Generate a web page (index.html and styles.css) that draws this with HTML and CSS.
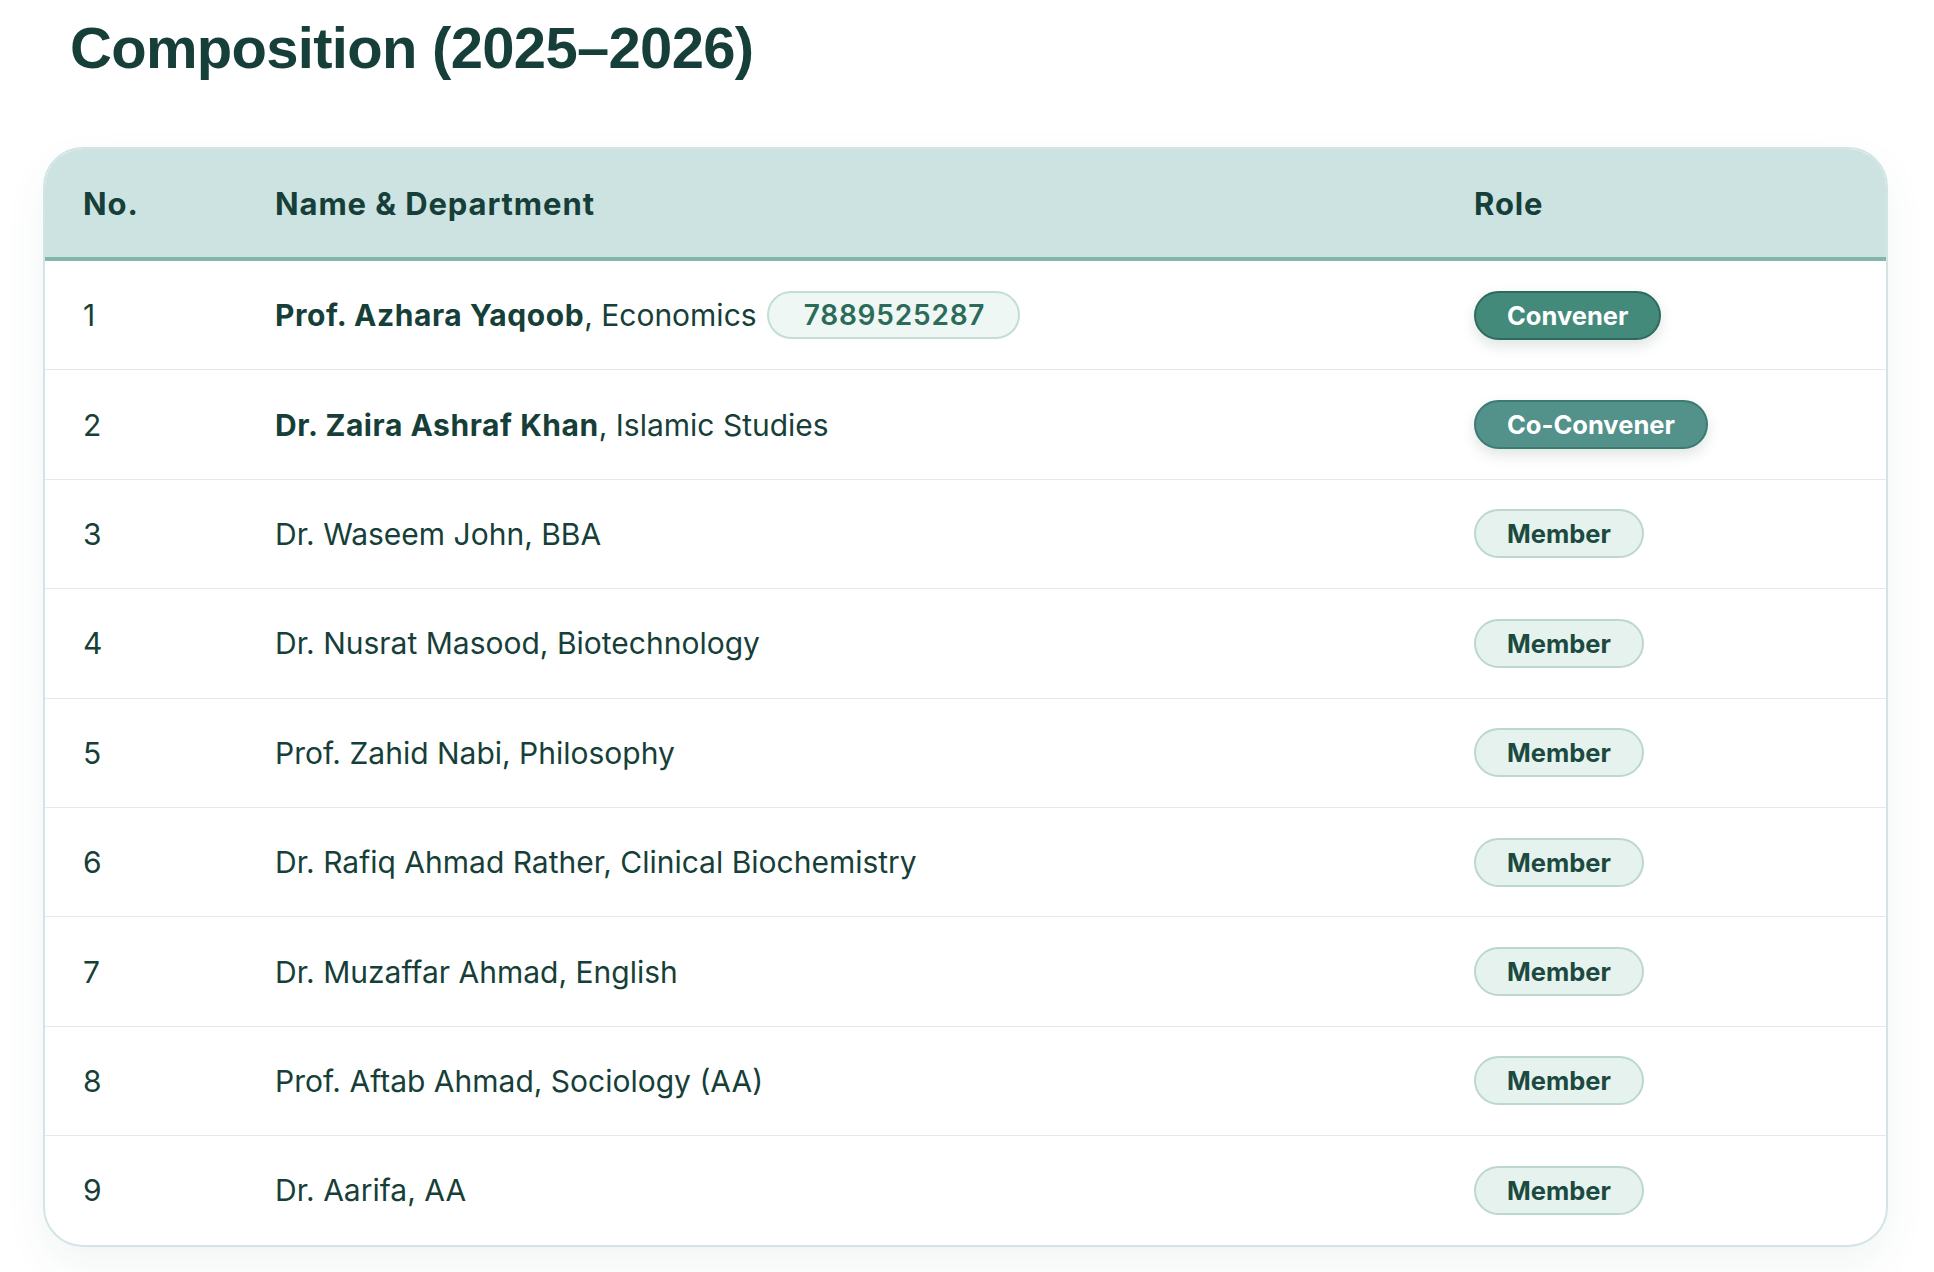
FILE: index.html
```html
<!DOCTYPE html>
<html lang="en">
<head>
<meta charset="utf-8">
<title>Composition (2025–2026)</title>
<link rel="stylesheet" href="styles.css">
</head>
<body>
<div class="page">
  <h1 class="title">Composition (2025–2026)</h1>
  <div class="card">
    <table class="members">
      <thead>
        <tr>
          <th class="col-no">No.</th>
          <th class="col-name">Name &amp; Department</th>
          <th class="col-role">Role</th>
        </tr>
      </thead>
      <tbody>
        <tr>
          <td>1</td>
          <td><span class="name-line"><span><strong>Prof. Azhara Yaqoob</strong>, Economics</span><span class="phone">7889525287</span></span></td>
          <td><span class="badge badge-convener">Convener</span></td>
        </tr>
        <tr>
          <td>2</td>
          <td><strong>Dr. Zaira Ashraf Khan</strong>, Islamic Studies</td>
          <td><span class="badge badge-coconvener">Co-Convener</span></td>
        </tr>
        <tr>
          <td>3</td>
          <td>Dr. Waseem John, BBA</td>
          <td><span class="badge badge-member">Member</span></td>
        </tr>
        <tr>
          <td>4</td>
          <td>Dr. Nusrat Masood, Biotechnology</td>
          <td><span class="badge badge-member">Member</span></td>
        </tr>
        <tr>
          <td>5</td>
          <td>Prof. Zahid Nabi, Philosophy</td>
          <td><span class="badge badge-member">Member</span></td>
        </tr>
        <tr>
          <td>6</td>
          <td>Dr. Rafiq Ahmad Rather, Clinical Biochemistry</td>
          <td><span class="badge badge-member">Member</span></td>
        </tr>
        <tr>
          <td>7</td>
          <td>Dr. Muzaffar Ahmad, English</td>
          <td><span class="badge badge-member">Member</span></td>
        </tr>
        <tr>
          <td>8</td>
          <td>Prof. Aftab Ahmad, Sociology (AA)</td>
          <td><span class="badge badge-member">Member</span></td>
        </tr>
        <tr>
          <td>9</td>
          <td>Dr. Aarifa, AA</td>
          <td><span class="badge badge-member">Member</span></td>
        </tr>
      </tbody>
    </table>
  </div>
</div>
</body>
</html>
```

FILE: styles.css
```css
html, body {
  margin: 0;
  padding: 0;
  background: #ffffff;
}

body {
  font-family: "Inter", "Noto Sans", sans-serif;
  color: #173f39;
}

.page {
  padding: 0 46px 40px 43px;
}

.title {
  margin: 0;
  padding: 14px 0 0 27px;
  font-family: "Liberation Sans", Arial, sans-serif;
  font-weight: 700;
  font-size: 58px;
  line-height: 68px;
  letter-spacing: -0.7px;
  color: #173f39;
}

.card {
  margin-top: 65px;
  border: 2px solid #d3e4e7;
  border-radius: 40px;
  overflow: hidden;
  background: #ffffff;
  box-shadow: 0 18px 44px rgba(40, 80, 80, 0.06);
}

.members {
  width: 100%;
  border-collapse: collapse;
  table-layout: fixed;
}

.col-no { width: 152px; }
.col-role { width: 412px; }

.members th {
  height: 108px;
  padding: 0 0 0 40px;
  text-align: left;
  font-weight: 700;
  font-size: 31px;
  letter-spacing: 0.9px;
  color: #173f39;
  background: #cde3e1;
  border-bottom: 4px solid #83b6aa;
}

.members th.col-no,
.members td:first-child {
  padding-left: 38px;
}

.members td {
  height: 108.4px;
  padding: 0 0 0 40px;
  font-size: 30px;
  font-weight: 400;
  color: #173f39;
  border-top: 1px solid #dfebee;
  vertical-align: middle;
}

.members tbody tr:first-child td {
  border-top: 1px solid transparent;
}

.members strong {
  font-weight: 700;
  letter-spacing: 0.55px;
}

.name-line {
  display: flex;
  align-items: center;
  gap: 10px;
}

.phone {
  display: inline-flex;
  align-items: center;
  height: 44px;
  padding: 0 33px 0 35px;
  border: 2px solid #c2ded5;
  border-radius: 999px;
  background: #eef7f4;
  color: #2c6b5a;
  font-weight: 600;
  font-size: 28px;
  letter-spacing: 0.8px;
}

.badge {
  display: inline-flex;
  align-items: center;
  height: 45px;
  padding: 0 31px;
  border-radius: 999px;
  font-weight: 700;
  font-size: 25.5px;
  border: 2px solid transparent;
}

.badge-convener {
  background: #438a7b;
  border-color: #2f6a5e;
  color: #ffffff;
  box-shadow: 0 6px 14px rgba(30, 70, 60, 0.14);
}

.badge-coconvener {
  background: #52928a;
  border-color: #3d7a71;
  color: #ffffff;
  box-shadow: 0 6px 14px rgba(30, 70, 60, 0.14);
}

.badge-member {
  background: #e6f2ee;
  border-color: #bcd7d0;
  color: #1c4a40;
}
```
